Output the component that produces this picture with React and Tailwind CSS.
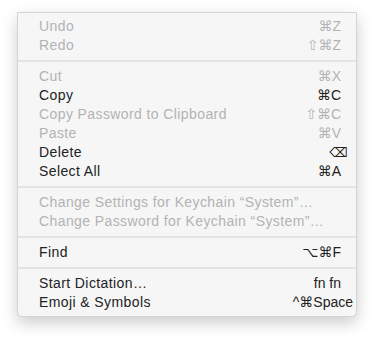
import React from "react";

const groups = [
  [
    { label: "Undo", keys: "⌘Z", off: true },
    { label: "Redo", keys: "⇧⌘Z", off: true },
  ],
  [
    { label: "Cut", keys: "⌘X", off: true },
    { label: "Copy", keys: "⌘C" },
    { label: "Copy Password to Clipboard", keys: "⇧⌘C", off: true },
    { label: "Paste", keys: "⌘V", off: true },
    { label: "Delete", keys: "⌫", shift: "mr-[-7px] text-[13px]" },
    { label: "Select All", keys: "⌘A" },
  ],
  [
    { label: "Change Settings for Keychain “System”…", off: true },
    { label: "Change Password for Keychain “System”…", off: true },
  ],
  [{ label: "Find", keys: "⌥⌘F" }],
  [
    { label: "Start Dictation…", keys: "fn fn" },
    { label: "Emoji & Symbols", keys: "^⌘Space", shift: "mr-[-12px]" },
  ],
];

function Item({ item }) {
  return (
    <div
      className={
        "flex h-[19px] items-center justify-between pl-[21px] pr-[15px] " +
        (item.off ? "text-[#b3b3b3]" : "text-[#222]")
      }
    >
      <span className="tracking-[0.4px]">{item.label}</span>
      {item.keys && <span className={item.shift || ""}>{item.keys}</span>}
    </div>
  );
}

export default function App() {
  return (
    <div className="min-h-[337px] bg-white pl-[17px] pt-[12px]">
      <div
        className="w-[340px] rounded-b-[5px] border border-[#d4d4d4] bg-[#f6f6f6] pb-[4px] pt-[4px] text-[14px] leading-[19px] shadow-[0_6px_16px_rgba(0,0,0,0.2)]"
        style={{ fontFamily: '"Liberation Sans", "DejaVu Sans", sans-serif' }}
      >
        {groups.map((g, i) => (
          <div key={i}>
            {i > 0 && (
              <div className="flex h-[12px] items-center">
                <div className="h-[2px] w-full bg-[#e4e4e4]" />
              </div>
            )}
            {g.map((item) => (
              <Item key={item.label} item={item} />
            ))}
          </div>
        ))}
      </div>
    </div>
  );
}
